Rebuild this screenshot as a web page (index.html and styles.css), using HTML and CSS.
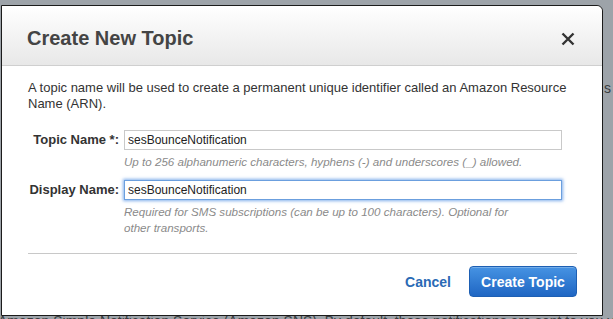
FILE: index.html
```html
<!DOCTYPE html>
<html lang="en">
<head>
  <meta charset="UTF-8" />
  <meta name="viewport" content="width=device-width, initial-scale=1.0"/>
  <title>Create New Topic</title>
  <link rel="stylesheet" href="styles.css">
</head>
<body>

  <div class="page">
    <p class="page-line peek">s</p>
    <p class="page-line last">Amazon Simple Notification Service (Amazon SNS). By default, these notifications are sent to you via email</p>
  </div>

  <div class="modal">
    <div class="modal-header">
      <h2>Create New Topic</h2>
      <button class="close" aria-label="Close">
        <svg width="14" height="14" viewBox="0 0 14 14">
          <path d="M1.5 1.5 L12.5 12.5 M12.5 1.5 L1.5 12.5" stroke="#333" stroke-width="2.4" stroke-linecap="butt"/>
        </svg>
      </button>
    </div>

    <div class="modal-body">
      <p class="intro">A topic name will be used to create a permanent unique identifier called an Amazon Resource Name (ARN).</p>

      <div class="form">
        <label class="label" for="topic">Topic Name *:</label>
        <div class="field">
          <input class="input" id="topic" type="text" value="sesBounceNotification" />
          <p class="help">Up to 256 alphanumeric characters, hyphens (-) and underscores (_) allowed.</p>
        </div>

        <label class="label" for="display">Display Name:</label>
        <div class="field">
          <input class="input focused" id="display" type="text" value="sesBounceNotification" />
          <p class="help">Required for SMS subscriptions (can be up to 100 characters). Optional for other transports.</p>
        </div>
      </div>
    </div>

    <div class="modal-footer">
      <a class="cancel" href="#">Cancel</a>
      <button class="btn-primary">Create Topic</button>
    </div>
  </div>

</body>
</html>
```

FILE: styles.css
```css
* {
  margin: 0;
  padding: 0;
  box-sizing: border-box;
}

body {
  font-family: 'Liberation Sans', Arial, sans-serif;
  background: #9da3a9;
  width: 613px;
  height: 319px;
  overflow: hidden;
  position: relative;
}

/* page behind the dialog */
.page {
  color: #3a3d40;
  font-size: 14px;
}

.page-line {
  white-space: nowrap;
  position: absolute;
}

.page-line.peek {
  top: 80px;
  left: 604px;
}

.page-line.last {
  top: 313px;
  left: -2px;
}

/* dialog */
.modal {
  position: absolute;
  top: 5px;
  left: 1px;
  width: 602px;
  height: 311px;
  background: #fff;
  border: 1px solid #1b1b1b;
  border-radius: 0 6px 0 0;
  display: flex;
  flex-direction: column;
}

.modal-header {
  display: flex;
  align-items: center;
  justify-content: space-between;
  height: 60px;
  padding: 6px 26px 0 25px;
  background: linear-gradient(#ffffff, #e8e8e8);
  border-bottom: 1px solid #cfcfcf;
  border-radius: 0 6px 0 0;
}

.modal-header h2 {
  font-size: 20px;
  font-weight: bold;
  color: #444;
}

.close {
  border: none;
  background: none;
  width: 14px;
  height: 14px;
  margin-right: 1px;
  display: flex;
}

.modal-body {
  padding: 14px 26px 0;
  color: #333;
}

.intro {
  font-size: 13px;
  line-height: 16px;
  margin-bottom: 18px;
}

.form {
  display: grid;
  grid-template-columns: 91px 1fr;
  column-gap: 5px;
  row-gap: 10px;
}

.label {
  font-size: 13px;
  font-weight: bold;
  color: #333;
  text-align: right;
  line-height: 20px;
  white-space: nowrap;
}

.field {
  padding-right: 14px;
}

.input {
  display: block;
  width: 100%;
  height: 20px;
  border: 1px solid #c9c9c9;
  padding: 0 3px;
  font-family: 'Liberation Sans', Arial, sans-serif;
  font-size: 12px;
  color: #222;
  outline: none;
}

.input.focused {
  border-color: #6b9fde;
  box-shadow: 0 0 3px 1px rgba(90, 150, 230, 0.75);
}

.help {
  margin-top: 4px;
  font-size: 11.6px;
  font-style: italic;
  color: #8a8a8a;
  line-height: 16px;
  max-width: 410px;
}

.modal-footer {
  margin: auto 25px 0 26px;
  border-top: 1px solid #c8c8c8;
  height: 62px;
  padding-bottom: 6px;
  display: flex;
  align-items: center;
  justify-content: flex-end;
  gap: 18px;
}

.cancel {
  color: #2a6ab5;
  font-size: 14px;
  font-weight: bold;
  text-decoration: none;
}

.btn-primary {
  font-family: 'Liberation Sans', Arial, sans-serif;
  font-size: 14px;
  font-weight: bold;
  color: #fff;
  width: 108px;
  height: 31px;
  border: 1px solid #1d5fb3;
  border-radius: 4px;
  background: linear-gradient(#4693e3, #1f66c3);
  box-shadow: inset 0 1px 0 rgba(255, 255, 255, 0.25);
}
```
